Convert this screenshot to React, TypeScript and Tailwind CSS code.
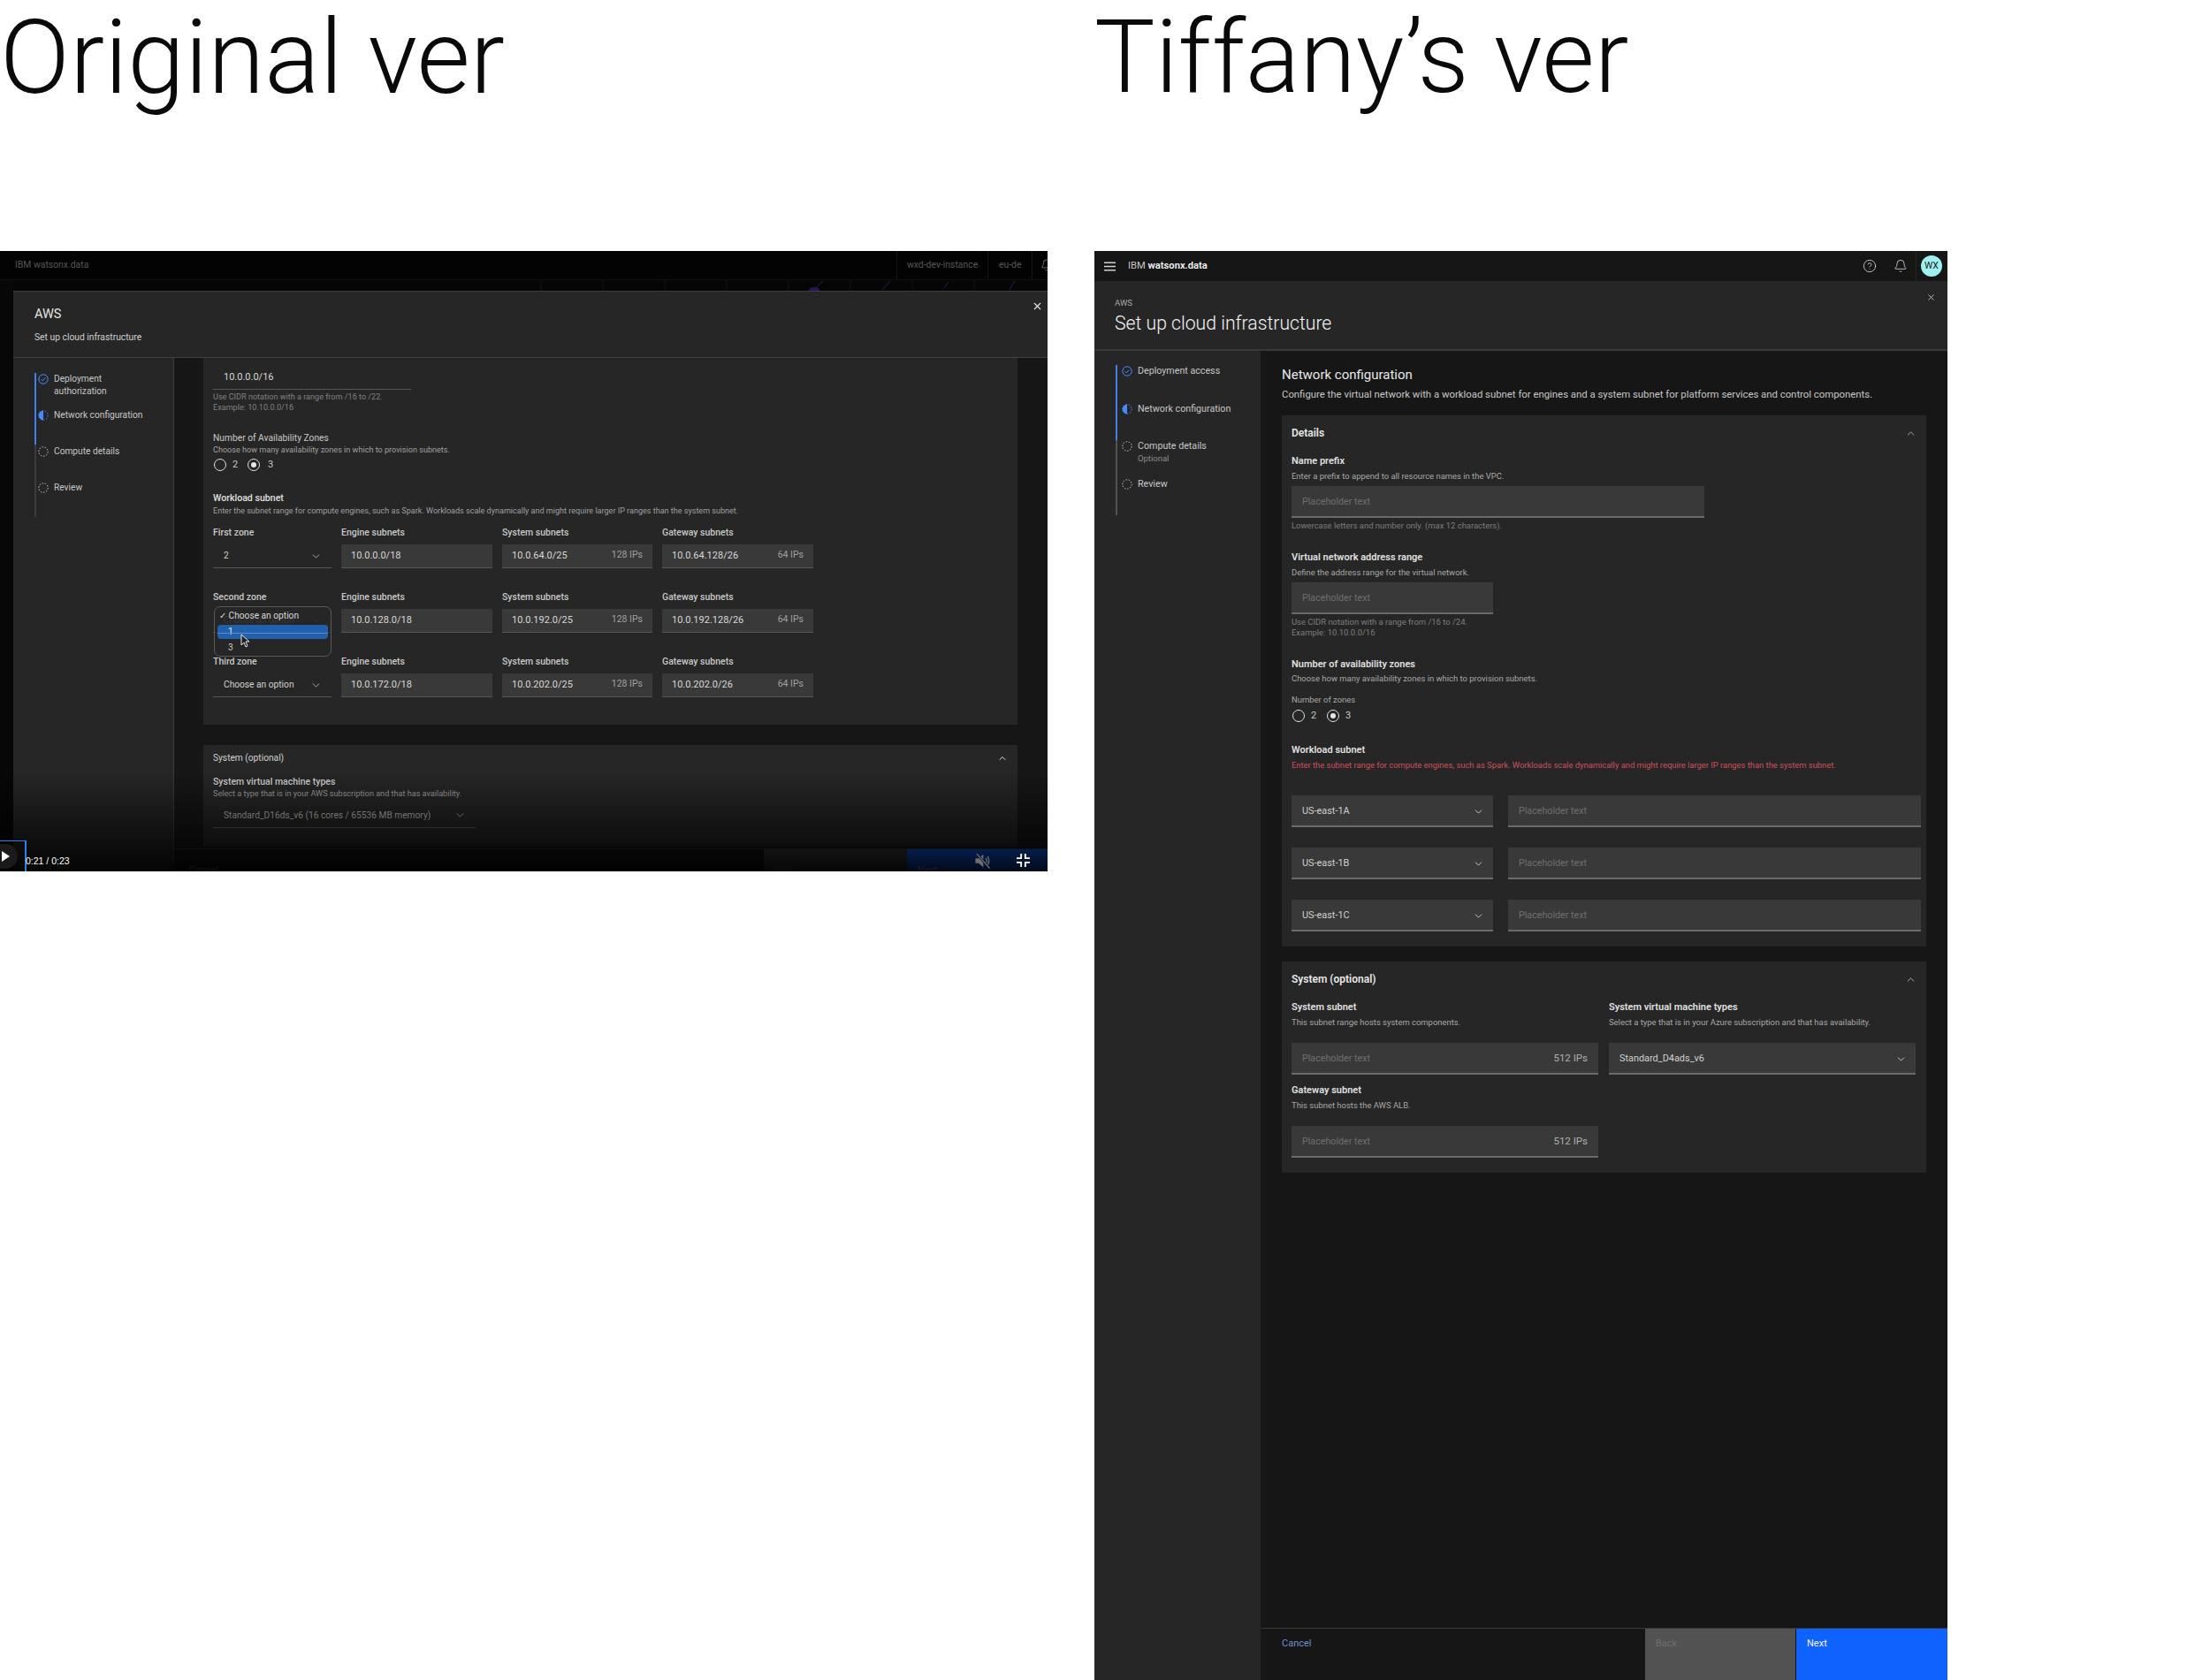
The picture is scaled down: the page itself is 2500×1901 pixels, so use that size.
import React from "react";
import { Bell, CircleHelp, X, ChevronDown, ChevronUp } from "lucide-react";

const CheckStep = () => (
  <svg width="12" height="12" viewBox="0 0 12 12" fill="none" className="shrink-0">
    <circle cx="6" cy="6" r="5.2" stroke="#4589ff" strokeWidth="1" />
    <path d="M3.6 6.2 5.3 7.9 8.4 4.4" stroke="#4589ff" strokeWidth="1" />
  </svg>
);
const HalfStep = () => (
  <svg width="12" height="12" viewBox="0 0 12 12" fill="none" className="shrink-0">
    <path d="M6 .6a5.4 5.4 0 0 0 0 10.8z" fill="#4589ff" />
    <circle cx="6" cy="6" r="5.2" stroke="#4589ff" strokeWidth="1" strokeDasharray="1.6 1.6" />
  </svg>
);
const EmptyStep = () => (
  <svg width="12" height="12" viewBox="0 0 12 12" fill="none" className="shrink-0">
    <circle cx="6" cy="6" r="5.2" stroke="#c6c6c6" strokeWidth="1" strokeDasharray="1.6 1.6" />
  </svg>
);
const Radio = ({ on }: { on?: boolean }) => (
  <span className="w-[14px] h-[14px] rounded-full border border-[#e0e0e0] flex items-center justify-center shrink-0">
    {on && <span className="w-[6px] h-[6px] rounded-full bg-[#e8e8e8]" />}
  </span>
);
const Chev = ({ c = "#c6c6c6" }: { c?: string }) => <ChevronDown size={13} color={c} strokeWidth={1.5} className="shrink-0" />;

const LField = ({ value, note }: { value: string; note: string }) => (
  <div className="h-[27px] bg-[#393939] border-b border-[#565656] flex items-center justify-between pl-[11px] pr-[11px] text-[11px] text-[#d8d8d8]">
    <span>{value}</span>
    {note && <span className="text-[#a0a0a0] text-[10.5px] -mt-[3px]">{note}</span>}
  </div>
);
const LSelect = ({ value, dim }: { value: string; dim?: boolean }) => (
  <div className="h-[27px] border-b border-[#565656] flex items-center justify-between pl-[12px] pr-[11px] text-[10.2px] text-[#d0d0d0]">
    <span className={dim ? "opacity-30" : ""}>{value}</span>
    <span className={dim ? "opacity-30" : ""}><Chev /></span>
  </div>
);
const LLabel = ({ t }: { t: string }) => <div className="text-[10.5px] leading-[14px] font-medium text-[#c8c8c8] mb-[6px]">{t}</div>;

const ZoneRow = ({ zone, engine, sys, gw, select, dim, top }: { zone: string; engine: string; sys: string; gw: string; select: string; dim?: boolean; top: string }) => (
  <div className={`grid grid-cols-[134px_171px_170px_171px] gap-x-[11px] ${top}`}>
    <div className="relative">
      <LLabel t={zone} />
      <LSelect value={select} dim={dim} />
      {dim && (
        <div className="absolute left-[1px] top-[17px] w-[133px] h-[57px] rounded-[7px] border border-[#5a5a5a] bg-[#262626]/70 z-10 text-[10.2px] text-[#d8d8d8] px-[3px]">
          <div className="h-[20px] flex items-center pl-[2px] pt-[1px] leading-none">✓ Choose an option</div>
          <div className="relative h-[16px] rounded-[4px] bg-[#2160ad] flex items-center pl-[12px] text-[#dfe8f2]">
            1
            <span className="absolute left-0 right-0 top-[9px] h-px bg-[#5d8cc4]" />
          </div>
          <div className="h-[20px] flex items-center pl-[12px] text-[#c6c6c6]">3</div>
          <svg width="13" height="18" viewBox="0 0 13 18" className="absolute left-[29px] top-[30px]">
            <path d="M1 1v12l3-3 2 5 2-1-2-5h4z" fill="#222" stroke="#e8e8e8" strokeWidth="1" />
          </svg>
        </div>
      )}
    </div>
    <div><LLabel t="Engine subnets" /><LField value={engine} note="" /></div>
    <div><LLabel t="System subnets" /><LField value={sys} note="128 IPs" /></div>
    <div><LLabel t="Gateway subnets" /><LField value={gw} note="64 IPs" /></div>
  </div>
);

const Step = ({ icon, label, sub, h, twoLine, size }: { icon: React.ReactNode; label: string; sub?: string; h: string; twoLine?: boolean; size: string }) => (
  <div className={`flex gap-[6px] ${h}`}>
    <span className="mt-[1px]">{icon}</span>
    <div className={twoLine ? "w-[90px]" : ""}>
      <div className={`${size} leading-[14px] text-[#c6c6c6]`}>{label}</div>
      {sub && <div className="text-[9.5px] leading-[13px] text-[#8d8d8d]">{sub}</div>}
    </div>
  </div>
);

const OriginalVer = () => (
  <div className="relative w-[1185px] h-[702px] bg-[#050505] flex flex-col overflow-hidden">
    <div className="h-[33px] shrink-0 bg-[#030303] border-b border-[#111] flex items-center justify-between text-[10.4px] text-[#565656]">
      <span className="pl-[17px]">IBM watsonx.data</span>
      <div className="flex h-full items-center">
        <div className="h-full border-l border-[#151515] flex items-center w-[103px] pl-[11px]">wxd-dev-instance</div>
        <div className="h-full border-l border-[#151515] flex items-center w-[50px] pl-[12px]">eu-de</div>
        <div className="h-full border-l border-[#151515] flex items-center w-[18px] pl-[9px] overflow-hidden"><Bell size={14} color="#565656" className="shrink-0" /></div>
      </div>
    </div>
    <div className="flex-1 flex min-h-0">
      <div className="w-[15px] shrink-0 bg-[#070707]" />
      <div className="flex-1 flex flex-col min-w-0">
        <svg width="1170" height="12" viewBox="0 0 1170 12" fill="none" className="shrink-0 bg-[#050505] block">
          <path d="M597 0v12M667 0v12M737 0v12M807 0v12M877 0v12M947 0v12M1017 0v12M1087 0v12" stroke="#141022" />
          <path d="M905 11 916 1M983 11 992 1M1127 11 1133 1M1052 10l6-8" stroke="#2a1c55" />
          <ellipse cx="906" cy="11" rx="6" ry="3" fill="#2a1458" />
        </svg>
        <div className="flex-1 flex flex-col min-h-0 border-t border-[#3f3f3f]">
          <div className="h-[75px] shrink-0 bg-[#262626] border-b border-[#424242] flex justify-between pl-[24px] pr-[5px]">
            <div>
              <div className="text-[14.5px] leading-[20px] text-[#e4e4e4] mt-[16px]">AWS</div>
              <div className="text-[10.3px] leading-[14px] text-[#d0d0d0] mt-[9px]">Set up cloud infrastructure</div>
            </div>
            <X size={13} color="#e8e8e8" className="mt-[10px]" strokeWidth={2} />
          </div>
          <div className="flex-1 flex min-h-0">
            <div className="w-[182px] shrink-0 bg-[#262626] border-r border-[#3d3d3d] pt-[17px] pl-[24px]">
              <div className="flex">
                <div className="w-[2px] flex flex-col h-[163px] bg-[#3a3a3a]"><div className="h-[81px] bg-[#3f80ea]" /></div>
                <div className="pl-[2px]">
                  <Step size="text-[10.2px]" icon={<CheckStep />} label="Deployment authorization" h="h-[41px]" twoLine />
                  <Step size="text-[10.2px]" icon={<HalfStep />} label="Network configuration" h="h-[41px]" />
                  <Step size="text-[10.2px]" icon={<EmptyStep />} label="Compute details" h="h-[41px]" />
                  <Step size="text-[10.2px]" icon={<EmptyStep />} label="Review" h="h-[40px]" />
                </div>
              </div>
            </div>
            <div className="flex-1 flex flex-col min-w-0 bg-[#161616]">
              <div className="flex-1 min-h-0 overflow-hidden pl-[33px] pr-[34px]">
                <div className="h-[415px] bg-[#262626] pl-[11px]">
                  <div className="w-[224px] h-[36px] border-b border-[#565656] pl-[12px] pt-[14px] text-[11px] leading-[16px] text-[#d8d8d8]">10.0.0.0/16</div>
                  <div className="mt-[2px] text-[9.1px] leading-[12px] text-[#808080]">Use CIDR notation with a range from /16 to /22.<br />Example: 10.10.0.0/16</div>
                  <div className="mt-[22px] text-[10.25px] leading-[14px] text-[#c8c8c8]">Number of Availability Zones</div>
                  <div className="text-[9.1px] leading-[12px] text-[#a0a0a0]">Choose how many availability zones in which to provision subnets.</div>
                  <div className="mt-[4px] ml-[1px] flex items-center text-[11px] leading-[14px] text-[#c6c6c6]">
                    <Radio /><span className="ml-[7px] w-[17px]">2</span><Radio on /><span className="ml-[9px]">3</span>
                  </div>
                  <div className="mt-[24px] text-[10.6px] leading-[14px] font-medium text-[#e0e0e0]">Workload subnet</div>
                  <div className="mt-[1px] text-[9.05px] leading-[12px] text-[#a0a0a0]">Enter the subnet range for compute engines, such as Spark. Workloads scale dynamically and might require larger IP ranges than the system subnet.</div>
                  <ZoneRow top="mt-[12px]" zone="First zone" select="2" engine="10.0.0.0/18" sys="10.0.64.0/25" gw="10.0.64.128/26" />
                  <ZoneRow top="mt-[26px]" zone="Second zone" select="Choose an option" dim engine="10.0.128.0/18" sys="10.0.192.0/25" gw="10.0.192.128/26" />
                  <ZoneRow top="mt-[26px]" zone="Third zone" select="Choose an option" engine="10.0.172.0/18" sys="10.0.202.0/25" gw="10.0.202.0/26" />
                </div>
                <div className="mt-[23px] h-[115px] bg-[#262626] pl-[11px] pr-[11px] pt-[8px]">
                  <div className="flex justify-between items-center text-[10.2px] leading-[14px] text-[#d0d0d0]">
                    <span>System (optional)</span>
                    <ChevronUp size={12} color="#e0e0e0" />
                  </div>
                  <div className="mt-[13px] text-[10.5px] leading-[14px] font-medium text-[#d0d0d0]">System virtual machine types</div>
                  <div className="text-[9.1px] leading-[12px] text-[#a0a0a0]">Select a type that is in your AWS subscription and that has availability.</div>
                  <div className="mt-[5px] w-[297px] h-[28px] border-b border-[#565656] flex items-center justify-between pl-[12px] pr-[11px] text-[10.2px] text-[#b8b8b8]">
                    <span>Standard_D16ds_v6 (16 cores / 65536 MB memory)</span>
                    <Chev />
                  </div>
                </div>
              </div>
              <div className="h-[26px] shrink-0 flex text-[11px] border-t border-[#333]">
                <div className="flex-1 bg-[#161616] pl-[17px] pt-[16px] text-[#6f8fd0]">Cancel</div>
                <div className="w-[162px] bg-[#3d3d3d] pl-[11px] pt-[16px] text-[#6f6f6f]">Back</div>
                <div className="w-[159px] bg-[#0f62fe] pl-[12px] pt-[16px] text-[#d0d8ff]">Next</div>
              </div>
            </div>
          </div>
        </div>
      </div>
    </div>
    <div className="absolute left-0 right-0 bottom-0 h-[112px] bg-linear-to-b from-transparent to-black/90 pointer-events-none" />
    <div className="absolute left-0 bottom-0 w-[30px] h-[35px] border-t border-r-2 border-[#2f7fe6] flex items-center">
      <span className="w-[20px] h-[28px] rounded-r-full bg-[#1a1a1a] flex items-center">
        <svg width="12" height="14" viewBox="0 0 12 14" className="ml-[1px]"><path d="M1 1l9 6-9 6z" fill="#fff" /></svg>
      </span>
    </div>
    <span className="absolute left-[29px] bottom-[5px] text-[10.5px] leading-[14px] text-white font-[Liberation_Sans,sans-serif]">0:21 / 0:23</span>
    <svg width="19" height="18" viewBox="0 0 20 20" fill="none" className="absolute left-[1102px] bottom-[3px]">
      <path d="M1 7h4l6-5v16l-6-5H1z" fill="#6e6e6e" />
      <path d="M14 6.5c1.4 2 1.4 5 0 7M16.4 4.5c2.2 3 2.2 8 0 11" stroke="#6e6e6e" strokeWidth="1.5" />
      <path d="M3 1.5 18.5 19" stroke="#0a1a40" strokeWidth="3" />
      <path d="M2.5 1 19 19.5" stroke="#6e6e6e" strokeWidth="1.4" />
    </svg>
    <svg width="15" height="15" viewBox="0 0 16 16" fill="none" className="absolute left-[1150px] bottom-[5px]">
      <path d="M5.5 0v5.5H0M10.5 0v5.5H16M0 10.5h5.5V16M16 10.5h-5.5V16" stroke="#fff" strokeWidth="2" />
    </svg>
  </div>
);

const RLabel = ({ t, cls = "" }: { t: string; cls?: string }) => <div className={`text-[11px] leading-[14px] font-semibold text-[#e0e0e0] ${cls}`}>{t}</div>;
const RHelp = ({ t, cls = "", dim }: { t: string; cls?: string; dim?: boolean }) => <div className={`text-[9.45px] leading-[12px] ${dim ? "text-[#7d7d7d]" : "text-[#a8a8a8]"} ${cls}`}>{t}</div>;
const RInput = ({ w = "", right, cls = "" }: { w?: string; right?: string; cls?: string }) => (
  <div className={`h-[36px] pt-[2px] bg-[#393939] border-b-2 border-[#6a6a6a] flex items-center justify-between px-[12px] text-[10.7px] text-[#6f6f6f] ${w} ${cls}`}>
    <span>Placeholder text</span>
    {right && <span className="text-[#b0b0b0] text-[11.5px]">{right}</span>}
  </div>
);
const RSelect = ({ v, cls = "" }: { v: string; cls?: string }) => (
  <div className={`h-[36px] pt-[2px] bg-[#393939] border-b-2 border-[#6a6a6a] flex items-center justify-between pl-[12px] pr-[10px] text-[10.9px] text-[#d0d0d0] ${cls}`}>
    <span>{v}</span>
    <Chev c="#e0e0e0" />
  </div>
);

const TiffanyVer = () => (
  <div className="w-[965px] h-[1617px] flex flex-col bg-[#161616]">
    <div className="h-[34px] shrink-0 bg-[#161616] flex items-center pl-[11px] text-[11.2px] text-[#c6c6c6]">
      <svg width="13" height="11" viewBox="0 0 13 11" fill="none">
        <path d="M0 1.2h13M0 5.5h13M0 9.8h13" stroke="#d0d0d0" strokeWidth="1.5" />
      </svg>
      <span className="ml-[14px]">IBM <span className="font-semibold text-[#f4f4f4]">watsonx.data</span></span>
      <div className="ml-auto flex items-center h-full">
        <CircleHelp size={16} color="#e0e0e0" strokeWidth={1.2} />
        <Bell size={16} color="#e0e0e0" strokeWidth={1.2} className="ml-[19px]" />
        <div className="ml-[9px] h-full border-l border-[#262626] pl-[5px] pr-[6px] flex items-center">
          <span className="w-[24px] h-[24px] rounded-full bg-[#9ef0f0] text-[#1c1c1c] text-[10.5px] flex items-center justify-center">WX</span>
        </div>
      </div>
    </div>
    <div className="h-[79px] shrink-0 bg-[#262626] border-b-2 border-[#393939] flex justify-between pl-[23px] pr-[13px]">
      <div>
        <div className="text-[9.5px] leading-[12px] text-[#a8a8a8] mt-[19px]">AWS</div>
        <div className="text-[21.2px] leading-[26px] font-light text-[#f4f4f4] mt-[4px]">Set up cloud infrastructure</div>
      </div>
      <X size={11} color="#c6c6c6" className="mt-[13px]" />
    </div>
    <div className="flex-1 flex min-h-0">
      <div className="w-[188px] shrink-0 bg-[#262626] pl-[24px] pt-[16px]">
        <div className="flex">
          <div className="w-[2px] h-[170px] bg-[#525252]"><div className="h-[85px] bg-[#3f80ea]" /></div>
          <div className="pl-[5px]">
            <Step size="text-[10.7px]" icon={<CheckStep />} label="Deployment access" h="h-[43px]" />
            <Step size="text-[10.7px]" icon={<HalfStep />} label="Network configuration" h="h-[42px]" />
            <Step size="text-[10.7px]" icon={<EmptyStep />} label="Compute details" sub="Optional" h="h-[43px]" />
            <Step size="text-[10.7px]" icon={<EmptyStep />} label="Review" h="h-[20px]" />
          </div>
        </div>
      </div>
      <div className="flex-1 flex flex-col min-w-0">
        <div className="flex-1 min-h-0 px-[24px] pt-[17px]">
          <div className="text-[15px] leading-[20px] text-[#e8e8e8]">Network configuration</div>
          <div className="mt-[4px] text-[11.35px] leading-[16px] text-[#c6c6c6]">Configure the virtual network with a workload subnet for engines and a system subnet for platform services and control components.</div>
          <div className="mt-[16px] h-[601px] bg-[#262626] px-[11px] pt-[12px]">
            <div className="flex justify-between items-center text-[12px] leading-[16px] font-semibold text-[#e8e8e8]">
              <span>Details</span>
              <ChevronUp size={13} color="#c6c6c6" strokeWidth={1.5} />
            </div>
            <RLabel t="Name prefix" cls="mt-[17px]" />
            <RHelp t="Enter a prefix to append to all resource names in the VPC." cls="mt-[4px]" />
            <RInput w="w-[467px]" cls="mt-[5px]" />
            <RHelp t="Lowercase letters and number only. (max 12 characters)." cls="mt-[3px]" dim />
            <RLabel t="Virtual network address range" cls="mt-[23px]" />
            <RHelp t="Define the address range for the virtual network." cls="mt-[4px]" />
            <RInput w="w-[228px]" cls="mt-[5px]" />
            <RHelp t="Use CIDR notation with a range from /16 to /24." cls="mt-[3px]" dim />
            <RHelp t="Example: 10.10.0.0/16" dim />
            <RLabel t="Number of availability zones" cls="mt-[23px]" />
            <RHelp t="Choose how many availability zones in which to provision subnets." cls="mt-[3px]" />
            <RHelp t="Number of zones" cls="mt-[12px]" />
            <div className="mt-[5px] ml-[1px] flex items-center text-[11px] leading-[14px] text-[#c6c6c6]">
              <Radio /><span className="ml-[7px] w-[18px]">2</span><Radio on /><span className="ml-[7px]">3</span>
            </div>
            <RLabel t="Workload subnet" cls="mt-[25px]" />
            <div className="mt-[4px] text-[9.4px] leading-[12px] text-[#d0505a]">Enter the subnet range for compute engines, such as Spark. Workloads scale dynamically and might require larger IP ranges than the system subnet.</div>
            <div className="mt-[28px] grid grid-cols-[228px_467px] gap-x-[17px] gap-y-[23px]">
              <RSelect v="US-east-1A" /><RInput />
              <RSelect v="US-east-1B" /><RInput />
              <RSelect v="US-east-1C" /><RInput />
            </div>
          </div>
          <div className="mt-[17px] h-[239px] bg-[#262626] px-[11px] pt-[12px]">
            <div className="flex justify-between items-center text-[12px] leading-[16px] font-semibold text-[#e8e8e8]">
              <span>System (optional)</span>
              <ChevronUp size={13} color="#c6c6c6" strokeWidth={1.5} />
            </div>
            <div className="grid grid-cols-[347px_347px] gap-x-[12px] mt-[17px]">
              <div>
                <RLabel t="System subnet" />
                <RHelp t="This subnet range hosts system components." cls="mt-[4px]" />
                <RInput right="512 IPs" cls="mt-[17px]" />
              </div>
              <div>
                <RLabel t="System virtual machine types" />
                <RHelp t="Select a type that is in your Azure subscription and that has availability." cls="mt-[4px]" />
                <RSelect v="Standard_D4ads_v6" cls="mt-[17px]" />
              </div>
              <div className="mt-[11px]">
                <RLabel t="Gateway subnet" />
                <RHelp t="This subnet hosts the AWS ALB." cls="mt-[4px]" />
                <RInput right="512 IPs" cls="mt-[17px]" />
              </div>
            </div>
          </div>
        </div>
        <div className="h-[59px] shrink-0 border-t border-[#393939] flex text-[11px] leading-[16px]">
          <div className="flex-1 pl-[24px] pt-[9px] text-[#6f8fd0]">Cancel</div>
          <div className="w-[170px] bg-[#525252] pl-[12px] pt-[9px] text-[#6f6f6f]">Back</div>
          <div className="ml-[1px] w-[171px] bg-[#0f62fe] pl-[12px] pt-[9px] text-[#f4f4f4]">Next</div>
        </div>
      </div>
    </div>
  </div>
);

export default function App() {
  return (
    <div className="w-[2500px] h-[1901px] bg-white flex font-[Roboto,sans-serif] overflow-hidden">
      <div className="w-[1238px] shrink-0">
        <div className="h-[284px] text-[116.5px] leading-[130px] font-light text-[#0a0a0a]">Original ver</div>
        <OriginalVer />
      </div>
      <div className="w-[965px] shrink-0">
        <div className="h-[284px] text-[115px] leading-[130px] font-light text-[#0a0a0a]">Tiffany’s ver</div>
        <TiffanyVer />
      </div>
    </div>
  );
}
